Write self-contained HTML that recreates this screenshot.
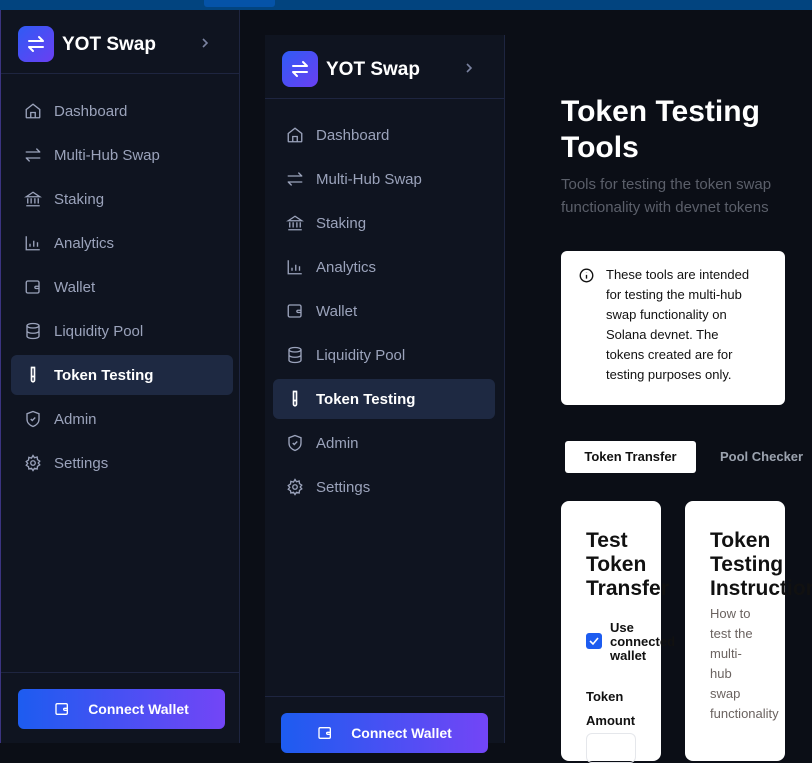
<!DOCTYPE html>
<html><head><meta charset="utf-8">
<style>
*{box-sizing:border-box;margin:0;padding:0}
body{width:812px;height:743px;overflow:hidden;background:#0b0e16;font-family:"Liberation Sans","DejaVu Sans",sans-serif;position:relative}
.top{position:absolute;left:0;top:0;width:812px;height:10px;background:#02447f}
.top i{position:absolute;left:204px;top:0;width:71px;height:7px;background:#0553a8;border-radius:0 0 3px 3px}
.sb{position:absolute;width:240px;background:#0f1420;border-right:1px solid #1e2540}
.hd{position:absolute;left:0;top:0;width:239px;height:64px;border-bottom:1px solid #1e2540}
.logo{position:absolute;left:17px;top:16px;width:36px;height:36px;border-radius:8px;background:linear-gradient(135deg,#2f5bf5,#6a3ff2)}
.logo svg{position:absolute;left:8px;top:8px}
.brand{position:absolute;left:61px;top:23px;color:#fff;font-weight:bold;font-size:19px;line-height:24px}
.chev{position:absolute;left:199px;top:26px}
.nav{position:absolute;left:10px;top:81px;width:222px}
.it{height:40px;margin-bottom:4px;display:flex;align-items:center;padding-left:13px;color:#9ba3bb;font-size:15px;border-radius:6px}
.it svg{width:18px;height:18px;margin-right:12px;flex:none}
.it.act{background:#1e2942;color:#fff;font-weight:bold}
.ft{position:absolute;left:0;width:239px;border-top:1px solid #1e2540}
.btn{position:absolute;left:17px;width:207px;height:40px;border-radius:6px;background:linear-gradient(90deg,#1d5cf0,#7345f6);color:#fff;font-size:14px;font-weight:bold;display:flex;align-items:center;justify-content:center}
.btn svg{margin-right:18px}
h1{position:absolute;left:561px;top:94px;color:#fff;font-size:30px;line-height:36px;font-weight:bold;width:240px}
.sub{position:absolute;left:561px;top:173px;color:#5b5f6a;font-size:15px;line-height:23px;width:240px}
.alert{position:absolute;left:561px;top:251px;width:224px;height:154px;background:#fff;border-radius:6px}
.alert svg{position:absolute;left:18px;top:17px}
.alert p{position:absolute;left:45px;top:14px;width:152px;font-size:13px;line-height:20px;color:#111}
.tab1{position:absolute;left:565px;top:441px;width:131px;height:32px;background:#fff;border-radius:3px;font-size:13px;font-weight:bold;color:#111;text-align:center;line-height:32px}
.tab2{position:absolute;left:720px;top:441px;height:32px;line-height:32px;font-size:13px;font-weight:bold;color:#9ca3af;white-space:nowrap}
.card{position:absolute;top:501px;width:100px;height:260px;background:#fff;border-radius:8px}
.ct{position:absolute;top:28px;left:25px;width:60px;font-size:21px;font-weight:bold;line-height:24px;color:#111}
</style></head><body>
<div class="top"><i></i></div>

<div class="sb" style="left:0;top:10px;height:733px;border-left:1px solid #3b3480">
 <div class="hd">
  <div class="logo"><svg width="20" height="20" viewBox="0 0 20 20" fill="none" stroke="#fff" stroke-width="2" stroke-linecap="round" stroke-linejoin="round"><path d="M3 7h14M13 3l4 4M17 13H3M7 17l-4-4"/></svg></div>
  <div class="brand">YOT Swap</div>
  <svg class="chev" width="10" height="14" viewBox="0 0 10 14" fill="none" stroke="#7a82a0" stroke-width="1.6"><path d="M3 3l4 4-4 4"/></svg>
 </div>
 <div class="nav" style="top:81px">
  <div class="it"><svg viewBox="0 0 24 24" fill="none" stroke="#9ba3bb" stroke-width="1.8"><path d="M3 10l9-7 9 7v10a1 1 0 01-1 1H4a1 1 0 01-1-1z"/><path d="M9 21v-7h6v7"/></svg>Dashboard</div>
  <div class="it"><svg viewBox="0 0 24 24" fill="none" stroke="#9ba3bb" stroke-width="1.8" stroke-linecap="round"><path d="M3 8h18M17 4l4 4M21 16H3M7 20l-4-4"/></svg>Multi-Hub Swap</div>
  <div class="it"><svg viewBox="0 0 24 24" fill="none" stroke="#9ba3bb" stroke-width="1.8"><path d="M3 9l9-6 9 6zM5 11v7M9.5 11v7M14.5 11v7M19 11v7M3 21h18"/></svg>Staking</div>
  <div class="it"><svg viewBox="0 0 24 24" fill="none" stroke="#9ba3bb" stroke-width="1.8"><path d="M3 3v18h18M8 17v-4M13 17V9M18 17v-6"/></svg>Analytics</div>
  <div class="it"><svg viewBox="0 0 24 24" fill="none" stroke="#9ba3bb" stroke-width="1.8"><rect x="3" y="4" width="17" height="16" rx="2"/><path d="M20 11h-4a1.5 1.5 0 000 3h4"/></svg>Wallet</div>
  <div class="it"><svg viewBox="0 0 24 24" fill="none" stroke="#9ba3bb" stroke-width="1.8"><ellipse cx="12" cy="5" rx="8" ry="3"/><path d="M4 5v14c0 1.7 3.6 3 8 3s8-1.3 8-3V5M4 12c0 1.7 3.6 3 8 3s8-1.3 8-3"/></svg>Liquidity Pool</div>
  <div class="it act"><svg viewBox="0 0 24 24" fill="none" stroke="#fff" stroke-width="2.2"><path d="M9 2h6M10 2v17a2 2 0 004 0V2M10 14h4"/></svg>Token Testing</div>
  <div class="it"><svg viewBox="0 0 24 24" fill="none" stroke="#9ba3bb" stroke-width="1.8"><path d="M12 2l8 3v7c0 5-3.5 8.5-8 10-4.5-1.5-8-5-8-10V5z"/><path d="M9 12l2 2 4-4"/></svg>Admin</div>
  <div class="it"><svg viewBox="0 0 24 24" fill="none" stroke="#9ba3bb" stroke-width="1.8"><circle cx="12" cy="12" r="3"/><path d="M12 2l2 3 3.5-1 .5 3.5 3 2-2 2.5 2 2.5-3 2-.5 3.5-3.5-1-2 3-2-3-3.5 1L6 17l-3-2 2-2.5-2-2.5 3-2 .5-3.5 3.5 1z"/></svg>Settings</div>
 </div>
 <div class="ft" style="top:662px;height:71px"></div>
 <div class="btn" style="top:679px"><svg width="16" height="16" viewBox="0 0 24 24" fill="none" stroke="#fff" stroke-width="2"><rect x="3" y="4" width="17" height="16" rx="2"/><path d="M20 11h-4a1.5 1.5 0 000 3h4"/></svg>Connect Wallet</div>
</div>

<div class="sb" style="left:265px;top:35px;height:708px">
 <div class="hd">
  <div class="logo"><svg width="20" height="20" viewBox="0 0 20 20" fill="none" stroke="#fff" stroke-width="2" stroke-linecap="round" stroke-linejoin="round"><path d="M3 7h14M13 3l4 4M17 13H3M7 17l-4-4"/></svg></div>
  <div class="brand">YOT Swap</div>
  <svg class="chev" width="10" height="14" viewBox="0 0 10 14" fill="none" stroke="#7a82a0" stroke-width="1.6"><path d="M3 3l4 4-4 4"/></svg>
 </div>
 <div class="nav" style="top:80px;left:8px">
  <div class="it"><svg viewBox="0 0 24 24" fill="none" stroke="#9ba3bb" stroke-width="1.8"><path d="M3 10l9-7 9 7v10a1 1 0 01-1 1H4a1 1 0 01-1-1z"/><path d="M9 21v-7h6v7"/></svg>Dashboard</div>
  <div class="it"><svg viewBox="0 0 24 24" fill="none" stroke="#9ba3bb" stroke-width="1.8" stroke-linecap="round"><path d="M3 8h18M17 4l4 4M21 16H3M7 20l-4-4"/></svg>Multi-Hub Swap</div>
  <div class="it"><svg viewBox="0 0 24 24" fill="none" stroke="#9ba3bb" stroke-width="1.8"><path d="M3 9l9-6 9 6zM5 11v7M9.5 11v7M14.5 11v7M19 11v7M3 21h18"/></svg>Staking</div>
  <div class="it"><svg viewBox="0 0 24 24" fill="none" stroke="#9ba3bb" stroke-width="1.8"><path d="M3 3v18h18M8 17v-4M13 17V9M18 17v-6"/></svg>Analytics</div>
  <div class="it"><svg viewBox="0 0 24 24" fill="none" stroke="#9ba3bb" stroke-width="1.8"><rect x="3" y="4" width="17" height="16" rx="2"/><path d="M20 11h-4a1.5 1.5 0 000 3h4"/></svg>Wallet</div>
  <div class="it"><svg viewBox="0 0 24 24" fill="none" stroke="#9ba3bb" stroke-width="1.8"><ellipse cx="12" cy="5" rx="8" ry="3"/><path d="M4 5v14c0 1.7 3.6 3 8 3s8-1.3 8-3V5M4 12c0 1.7 3.6 3 8 3s8-1.3 8-3"/></svg>Liquidity Pool</div>
  <div class="it act"><svg viewBox="0 0 24 24" fill="none" stroke="#fff" stroke-width="2.2"><path d="M9 2h6M10 2v17a2 2 0 004 0V2M10 14h4"/></svg>Token Testing</div>
  <div class="it"><svg viewBox="0 0 24 24" fill="none" stroke="#9ba3bb" stroke-width="1.8"><path d="M12 2l8 3v7c0 5-3.5 8.5-8 10-4.5-1.5-8-5-8-10V5z"/><path d="M9 12l2 2 4-4"/></svg>Admin</div>
  <div class="it"><svg viewBox="0 0 24 24" fill="none" stroke="#9ba3bb" stroke-width="1.8"><circle cx="12" cy="12" r="3"/><path d="M12 2l2 3 3.5-1 .5 3.5 3 2-2 2.5 2 2.5-3 2-.5 3.5-3.5-1-2 3-2-3-3.5 1L6 17l-3-2 2-2.5-2-2.5 3-2 .5-3.5 3.5 1z"/></svg>Settings</div>
 </div>
 <div class="ft" style="top:661px;height:47px"></div>
 <div class="btn" style="top:678px;left:16px"><svg width="16" height="16" viewBox="0 0 24 24" fill="none" stroke="#fff" stroke-width="2"><rect x="3" y="4" width="17" height="16" rx="2"/><path d="M20 11h-4a1.5 1.5 0 000 3h4"/></svg>Connect Wallet</div>
</div>

<h1>Token Testing Tools</h1>
<div class="sub">Tools for testing the token swap functionality with devnet tokens</div>
<div class="alert"><svg width="15" height="15" viewBox="0 0 24 24" fill="none" stroke="#111" stroke-width="2.2"><circle cx="12" cy="12" r="10"/><path d="M12 11v6M12 7.5v.5"/></svg><p>These tools are intended for testing the multi-hub swap functionality on Solana devnet. The tokens created are for testing purposes only.</p></div>
<div class="tab1">Token Transfer</div>
<div class="tab2">Pool Checker</div>

<div class="card" style="left:561px">
 <div class="ct">Test Token Transfer</div>
 <div style="position:absolute;left:25px;top:132px;width:16px;height:16px;background:#1d5cf0;border-radius:3px"><svg width="16" height="16" viewBox="0 0 16 16" fill="none" stroke="#fff" stroke-width="1.6"><path d="M4 8l3 3 5-6"/></svg></div>
 <div style="position:absolute;left:49px;top:120px;width:50px;font-size:13px;font-weight:bold;line-height:14px;color:#111">Use connected wallet</div>
 <div style="position:absolute;left:25px;top:184px;font-size:13px;font-weight:bold;line-height:24px;color:#111">Token<br>Amount</div>
 <div style="position:absolute;left:25px;top:232px;width:50px;height:30px;border:1px solid #e5e7eb;border-radius:6px"></div>
</div>
<div class="card" style="left:685px">
 <div class="ct">Token Testing Instructions</div>
 <div style="position:absolute;left:25px;top:103px;width:50px;font-size:13px;line-height:20px;color:#6b6360">How to test the multi-hub swap functionality</div>
</div>
</body></html>
